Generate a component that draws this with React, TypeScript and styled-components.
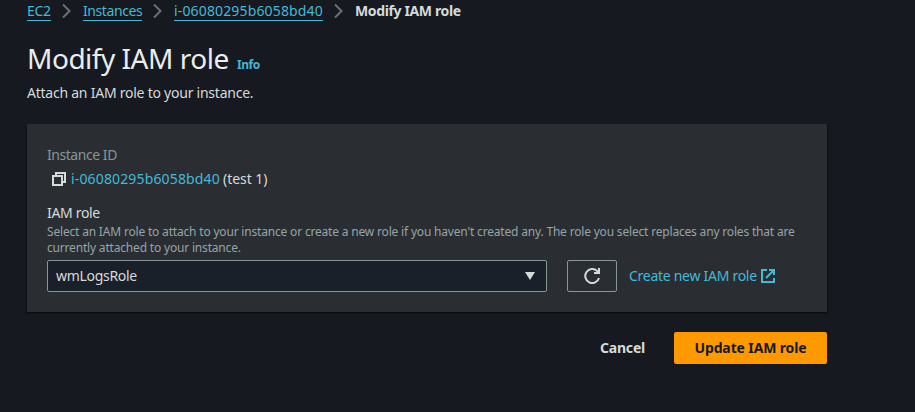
import React from "react";
import styled, { createGlobalStyle } from "styled-components";

const Global = createGlobalStyle`
  * { box-sizing: border-box; }
  body {
    margin: 0;
    background: #16191f;
    color: #d5dbdb;
    font: 14px/22px "Noto Sans", "Open Sans", sans-serif;
    overflow: hidden;
  }
`;

const Page = styled.main`
  width: 800px;
  margin-left: 27px;
  white-space: nowrap;
`;
const Breadcrumbs = styled.nav`
  display: flex;
  height: 22px;
  align-items: flex-start;
`;
const Crumb = styled.a<{ $width: number; $spacing: number }>`
  width: ${(p) => p.$width}px;
  height: 21px;
  border-bottom: 1px solid #44b9d6;
  color: #44b9d6;
  letter-spacing: ${(p) => p.$spacing}px;
`;
const CurrentCrumb = styled.span`
  font-weight: 700;
  letter-spacing: -0.37px;
`;
const Chevron = styled.svg`
  width: 9px;
  height: 16px;
  margin: 3px 12px 0 11px;
  fill: none;
  stroke: #687078;
  stroke-width: 2;
`;
const Heading = styled.header`
  display: flex;
  align-items: baseline;
  height: 36px;
  margin-top: 18px;
`;
const Title = styled.h1`
  width: 210px;
  margin: 0;
  color: #eaeded;
  font-size: 28px;
  font-weight: 400;
  line-height: 36px;
  letter-spacing: -0.48px;
`;
const Info = styled.a`
  color: #44b9d6;
  font-size: 12px;
  font-weight: 700;
  letter-spacing: -0.45px;
`;
const Description = styled.p`
  margin: 6px 0 0;
  letter-spacing: -0.24px;
`;
const Panel = styled.section`
  height: 188px;
  margin-top: 20px;
  padding: 20px;
  background: #2a2e33;
  box-shadow: 0 1px 1px #0b0d10, 1px 1px 1px #101317, -1px 1px 1px #101317;
`;
const MutedLabel = styled.div`
  color: #879596;
  letter-spacing: -0.45px;
`;
const Instance = styled.div`
  display: flex;
  align-items: center;
  height: 22px;
  margin-top: 2px;
  padding-left: 5px;
`;
const CopyIcon = styled.svg`
  width: 14px;
  height: 14px;
  margin-right: 5px;
  fill: none;
  stroke: #d5dbdb;
  stroke-width: 2;
`;
const InstanceLink = styled.a`
  width: 152px;
  color: #44b9d6;
  letter-spacing: 0.15px;
`;
const InstanceName = styled.span`
  letter-spacing: -0.05px;
`;
const FieldLabel = styled.label`
  display: block;
  margin-top: 12px;
  letter-spacing: -0.33px;
`;
const Help = styled.div`
  height: 16px;
  color: #95a5a6;
  font-size: 12px;
  line-height: 16px;
  letter-spacing: -0.183px;
`;
const FieldRow = styled.div`
  display: flex;
  align-items: center;
  margin-top: 4px;
`;
const Select = styled.div`
  display: flex;
  align-items: center;
  justify-content: space-between;
  width: 500px;
  height: 32px;
  padding: 0 11px 0 8px;
  border: 1px solid #879596;
  border-radius: 2px;
  background: #1a2029;
  letter-spacing: -0.3px;
`;
const Caret = styled.svg`
  width: 10px;
  height: 8px;
  fill: #d5dbdb;
`;
const Refresh = styled.button`
  display: grid;
  place-items: center;
  width: 50px;
  height: 32px;
  margin: 0 12px 0 20px;
  padding: 0;
  border: 1px solid #879596;
  border-radius: 2px;
  background: transparent;
`;
const RefreshIcon = styled.svg`
  width: 16px;
  height: 16px;
  fill: none;
  stroke: #d5dbdb;
  stroke-width: 2;
`;
const CreateLink = styled.a`
  display: flex;
  align-items: center;
  color: #44b9d6;
`;
const CreateText = styled.span`
  width: 132px;
  letter-spacing: -0.28px;
`;
const ExternalIcon = styled.svg`
  width: 14px;
  height: 14px;
  fill: none;
  stroke: #44b9d6;
  stroke-width: 2;
`;
const Actions = styled.footer`
  display: flex;
  justify-content: flex-end;
  margin-top: 20px;
`;
const Button = styled.button<{ $primary?: boolean }>`
  width: ${(p) => (p.$primary ? 153 : 103)}px;
  height: 32px;
  padding: 0;
  border: 0;
  border-radius: 2px;
  background: ${(p) => (p.$primary ? "#ff9900" : "transparent")};
  color: ${(p) => (p.$primary ? "#16191f" : "#d5dbdb")};
  font: 700 14px/22px "Noto Sans", sans-serif;
  letter-spacing: ${(p) => (p.$primary ? -0.13 : -0.2)}px;
`;

const Separator = () => (
  <Chevron viewBox="0 0 9 16">
    <path d="m1 1.5 6.5 6.5-6.5 6.5" />
  </Chevron>
);

export default function App() {
  return (
    <>
      <Global />
      <Page>
        <Breadcrumbs>
          <Crumb $width={24} $spacing={-0.3}>EC2</Crumb>
          <Separator />
          <Crumb $width={59} $spacing={-0.42}>Instances</Crumb>
          <Separator />
          <Crumb $width={149} $spacing={0.15}>i-06080295b6058bd40</Crumb>
          <Separator />
          <CurrentCrumb>Modify IAM role</CurrentCrumb>
        </Breadcrumbs>
        <Heading>
          <Title>Modify IAM role</Title>
          <Info>Info</Info>
        </Heading>
        <Description>Attach an IAM role to your instance.</Description>
        <Panel>
          <MutedLabel>Instance ID</MutedLabel>
          <Instance>
            <CopyIcon viewBox="0 0 14 14">
              <path d="M1 4h9v9H1zM4 4V1h9v9h-3" />
            </CopyIcon>
            <InstanceLink>i-06080295b6058bd40</InstanceLink>
            <InstanceName>(test 1)</InstanceName>
          </Instance>
          <FieldLabel>IAM role</FieldLabel>
          <Help>
            Select an IAM role to attach to your instance or create a new role if you haven't created any. The role you select replaces any roles that are
          </Help>
          <Help>currently attached to your instance.</Help>
          <FieldRow>
            <Select>
              wmLogsRole
              <Caret viewBox="0 0 10 8"><path d="M0 0h10L5 8z" /></Caret>
            </Select>
            <Refresh aria-label="Refresh">
              <RefreshIcon viewBox="0 0 16 16">
                <path d="M15 10a7 7 0 1 1-1.8-6.9L15 5" />
                <path d="M15 0v5H10" />
              </RefreshIcon>
            </Refresh>
            <CreateLink>
              <CreateText>Create new IAM role</CreateText>
              <ExternalIcon viewBox="0 0 14 14">
                <path d="M6 1H1v12h12V9M8 1h5v5M13 1 5 9" />
              </ExternalIcon>
            </CreateLink>
          </FieldRow>
        </Panel>
        <Actions>
          <Button>Cancel</Button>
          <Button $primary>Update IAM role</Button>
        </Actions>
      </Page>
    </>
  );
}
